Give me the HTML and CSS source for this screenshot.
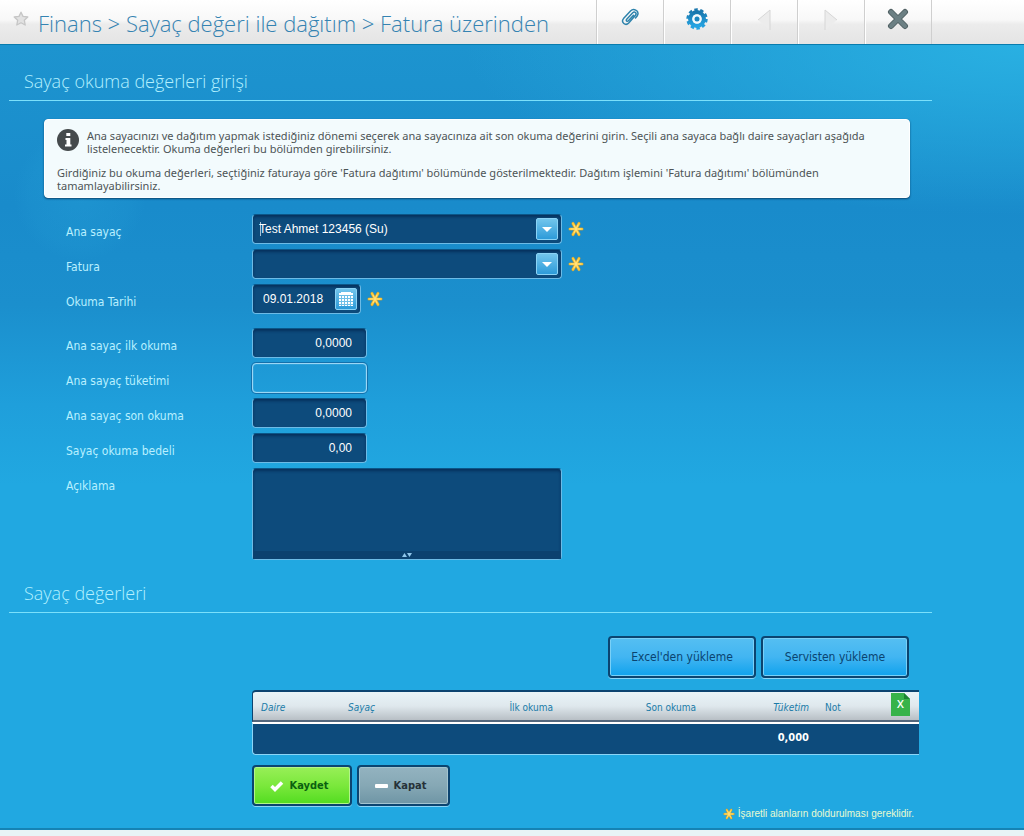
FILE: index.html
```html
<!DOCTYPE html>
<html lang="tr">
<head>
<meta charset="utf-8">
<title>Fatura üzerinden</title>
<link rel="stylesheet" href="styles.css">
</head>
<body>
<svg class="defs" aria-hidden="true">
  <symbol id="required" viewBox="0 0 16 16">
    <g fill="none" stroke-linecap="round">
      <path d="M2 8H14M5 2.500L11 13.500M11 2.500L5 13.500" stroke="#a99a55" stroke-width="3.200"/>
      <path d="M2 8H14M5 2.500L11 13.500M11 2.500L5 13.500" stroke="#ffc933" stroke-width="2.200"/>
      <path d="M3 8H13M6 4L10 12M10 4L6 12" stroke="#ffe48a" stroke-width="1"/>
    </g>
  </symbol>
</svg>
<header class="topbar">
  <div class="topbar-title">
    <button class="star" type="button" aria-label="Favorilere ekle">
      <svg width="16" height="16" viewBox="0 0 16 16"><path d="M8 1.200L10 5.400L14.800 6L11.300 9.200L12.200 14L8 11.700L3.800 14L4.700 9.200L1.200 6L6 5.400Z" fill="#e2e2e2" stroke="#c6c6c6" stroke-width="1.300" stroke-linejoin="round"/></svg>
    </button>
    <h1>Finans &gt; Sayaç değeri ile dağıtım &gt; Fatura üzerinden</h1>
  </div>
  <nav class="tools">
    <button type="button" aria-label="Ek dosya">
      <svg width="20" height="20" viewBox="0 0 20 20" fill="none" stroke="#2e83ac" stroke-width="1.500" stroke-linecap="round" stroke-linejoin="round"><path d="M13.500 7.200L8.400 12.700C7.100 14 5.500 12.500 6.700 11.200L12.500 5C14.700 2.800 17.300 5.300 15.300 7.500L8.700 15C5.500 18.300 0.600 14.400 3.500 10.600L10.500 3C13.500 0 19 2.500 17.800 6.500C17.500 8 16.500 9 15.500 10"/></svg>
    </button>
    <button type="button" aria-label="Ayarlar">
      <svg width="22" height="22" viewBox="0 0 22 22"><defs><linearGradient id="gear" x2="0" y2="1"><stop stop-color="#1a77ad"/><stop offset="1" stop-color="#25a4e3"/></linearGradient></defs><g fill="none" stroke="url(#gear)"><circle cx="11" cy="11" r="6.700" stroke-width="4.500"/><circle cx="11" cy="11" r="9.300" stroke-width="2.800" stroke-dasharray="3.400 2.443"/></g><circle cx="11" cy="11" r="4.800" fill="#f5fafc"/><circle cx="11" cy="11" r="2.500" fill="#1c86bf"/></svg>
    </button>
    <button type="button" aria-label="Önceki" disabled>
      <svg width="16" height="24" viewBox="0 0 16 24"><path d="M14 2V22L2 12Z" fill="#ececec"/><path d="M2 12L14 2V22" fill="none" stroke="#d6d6d6"/></svg>
    </button>
    <button type="button" aria-label="Sonraki" disabled>
      <svg width="16" height="24" viewBox="0 0 16 24"><path d="M2 2V22L14 12Z" fill="#ececec"/><path d="M2 22V2L14 12" fill="none" stroke="#d6d6d6"/></svg>
    </button>
    <button type="button" aria-label="Kapat">
      <svg width="22" height="22" viewBox="0 0 22 22" fill="none" stroke-linecap="round"><path d="M4 4L18 18M18 4L4 18" stroke="#526265" stroke-width="6"/><path d="M4 4L18 18M18 4L4 18" stroke="#6c8084" stroke-width="4"/></svg>
    </button>
  </nav>
</header>

<main class="page">
  <section>
    <h2>Sayaç okuma değerleri girişi</h2>
    <div class="info">
      <div class="info-lead">
        <svg width="22" height="22" viewBox="0 0 22 22"><circle cx="11" cy="11" r="11" fill="#454a4c"/><path d="M9.300 4h4v3h-4zM8.500 9h4.800v6.500h1.200v2H8v-2h1.500v-4.500h-1z" fill="#fff"/></svg>
        <p>Ana sayacınızı ve dağıtım yapmak istediğiniz dönemi seçerek ana sayacınıza ait son okuma değerini girin. Seçili ana sayaca bağlı daire sayaçları aşağıda listelenecektir. Okuma değerleri bu bölümden girebilirsiniz.</p>
      </div>
      <p>Girdiğiniz bu okuma değerleri, seçtiğiniz faturaya göre 'Fatura dağıtımı' bölümünde gösterilmektedir. Dağıtım işlemini 'Fatura dağıtımı' bölümünden tamamlayabilirsiniz.</p>
    </div>

    <form class="form">
      <div class="row">
        <label for="meter">Ana sayaç</label>
        <div class="combo">
          <select id="meter" class="field active"><option>Test Ahmet 123456 (Su)</option></select>
          <span class="chip arrow"></span>
        </div>
        <svg class="required" aria-label="Zorunlu"><use href="#required"/></svg>
      </div>
      <div class="row">
        <label for="invoice">Fatura</label>
        <div class="combo">
          <select id="invoice" class="field"><option></option></select>
          <span class="chip arrow"></span>
        </div>
        <svg class="required" aria-label="Zorunlu"><use href="#required"/></svg>
      </div>
      <div class="row">
        <label for="date">Okuma Tarihi</label>
        <div class="combo date">
          <input id="date" class="field" type="text" value="09.01.2018">
          <button class="chip" type="button" aria-label="Takvim">
            <svg width="14" height="14" viewBox="0 0 14 14"><path d="M2 0h10v1h2v13H0V1h2z" fill="#fff"/><path d="M0 3.500H14M0 6.500H14M0 9.500H14M0 12.500H14M2.500 3V14M5.500 3V14M8.500 3V14M11.500 3V14" stroke="#6fc0e8" stroke-width="1"/></svg>
          </button>
        </div>
        <svg class="required" aria-label="Zorunlu"><use href="#required"/></svg>
      </div>
      <div class="row spaced">
        <label for="first">Ana sayaç ilk okuma</label>
        <input id="first" class="field number" type="text" value="0,0000">
      </div>
      <div class="row">
        <label for="usage">Ana sayaç tüketimi</label>
        <input id="usage" class="field number readonly" type="text" readonly>
      </div>
      <div class="row">
        <label for="last">Ana sayaç son okuma</label>
        <input id="last" class="field number" type="text" value="0,0000">
      </div>
      <div class="row">
        <label for="fee">Sayaç okuma bedeli</label>
        <input id="fee" class="field number" type="text" value="0,00">
      </div>
      <div class="row top">
        <label for="note">Açıklama</label>
        <div class="combo">
          <textarea id="note" class="field"></textarea>
          <span class="grip"><svg width="10" height="4" viewBox="0 0 10 4"><path d="M0 4L2.500 0L5 4ZM5 0H10L7.500 4Z" fill="#8fc6ea"/></svg></span>
        </div>
      </div>
    </form>
  </section>

  <section>
    <h2>Sayaç değerleri</h2>
    <div class="loaders">
      <button class="btn blue" type="button">Excel'den yükleme</button>
      <button class="btn blue" type="button">Servisten yükleme</button>
    </div>
    <div class="results">
      <table>
        <colgroup><col class="c-flat"><col class="c-meter"><col class="c-first"><col class="c-last"><col class="c-usage"><col class="c-note"><col></colgroup>
        <thead>
          <tr>
            <th><em>Daire</em></th><th><em>Sayaç</em></th><th class="num">İlk okuma</th><th class="num">Son okuma</th><th class="num"><em>Tüketim</em></th><th>Not</th>
            <th><button class="export" type="button" aria-label="Excel'e aktar"><svg width="19" height="23" viewBox="0 0 19 23"><path d="M0 0H13L19 6V23H0Z" fill="#37b34a"/><path d="M13 0L19 6H13Z" fill="#1c8434"/></svg><span>X</span></button></th>
          </tr>
        </thead>
        <tbody>
          <tr><td></td><td></td><td></td><td></td><td class="num">0,000</td><td></td><td></td></tr>
        </tbody>
      </table>
    </div>
    <div class="actions">
      <button class="btn green" type="button"><svg width="14" height="12" viewBox="0 0 14 12"><path d="M1.500 6L5 9.500L12 2.500" fill="none" stroke="#fff" stroke-width="3.500"/></svg>Kaydet</button>
      <button class="btn gray" type="button"><svg width="13" height="12" viewBox="0 0 13 12"><rect y="4" width="13" height="4" rx="1" fill="#fff"/></svg>Kapat</button>
    </div>
    <p class="legend"><svg width="12" height="12"><use href="#required"/></svg>İşaretli alanların doldurulması gereklidir.</p>
  </section>
</main>
</body>
</html>
```
FILE: styles.css
```css
* { box-sizing: border-box; }
body {
  margin: 0;
  min-height: 100vh;
  background: #e8f4f6;
  font-family: "DejaVu Sans Condensed", "Noto Sans", sans-serif;
  font-size: 12px;
}
p, h1, h2 { margin: 0; }
button { padding: 0; border: 0; background: none; font: inherit; cursor: pointer; }
svg { flex: none; display: block; }
.defs { position: absolute; width: 0; height: 0; }

.topbar {
  display: flex;
  height: 45px;
  padding-right: 92px;
  background: linear-gradient(#fff, #f8f8f8 45%, #ececec 55%, #e4e4e4);
  border-bottom: 1px solid #087cae;
}
.topbar-title { flex: 1; display: flex; align-items: flex-start; padding-left: 13px; }
.star { margin-top: 11px; }
h1 {
  margin-left: 9px;
  font: 300 22px/46px "Open Sans", sans-serif;
  color: #3583b2;
  white-space: nowrap;
}
.tools { display: flex; border-right: 1px solid #cfcfcf; }
.tools button {
  display: flex;
  justify-content: center;
  width: 67px;
  padding-top: 8px;
  border-left: 1px solid #cfcfcf;
  box-shadow: inset 1px 0 #fff;
}

.page {
  padding: 0 92px 6px 9px;
  border-bottom: 2px solid #1583b4;
  background:
    radial-gradient(circle at 80px 150px, #28a5da50 0, #28a5da22 50px, transparent 66px),
    radial-gradient(ellipse 560px 170px at 100% 0, #29b0e2, transparent),
    linear-gradient(#1d94cf 0, #198bcb 160px, #1b8fcd 260px, #1f9fdb 360px, #21a8e1 440px);
}
h2 {
  height: 56px;
  padding: 20px 15px 0;
  border-bottom: 1px solid #7be0fb;
  font: 300 18px/32px "Open Sans", sans-serif;
  color: #b3f0ff;
}
section + section h2 { height: 53px; padding-top: 17px; }
.info {
  margin: 18px 22px 16px 35px;
  padding: 9px 32px 5px 12px;
  border: 1px solid #fff;
  border-radius: 4px;
  background: #f3fbfd;
  box-shadow: 0 1px 2px #0b4770;
  font-family: "Noto Sans", sans-serif;
  font-size: 11px;
  line-height: 13px;
  color: #4d5456;
}
.info-lead { display: flex; gap: 8px; margin-bottom: 11px; }

.form { display: flex; flex-direction: column; gap: 5px; padding-left: 57px; }
.row { display: flex; align-items: center; }
.row label { flex: none; width: 186px; padding-top: 5px; line-height: 16px; color: #b9f0ff; }
.row.spaced { margin-top: 9px; }
.row.top { align-items: flex-start; }
.row.top label { padding-top: 10px; }
.field {
  display: block;
  width: 100%;
  height: 30px;
  padding: 0 8px 0 6px;
  border: 1px solid #6dbbe6;
  border-top-color: #0b5688;
  border-radius: 4px;
  outline: 0;
  appearance: none;
  background: #0d4b7c;
  box-shadow: inset 0 2px 3px #06305c;
  font: 12px "Liberation Sans", sans-serif;
  color: #fff;
}
.active { background: linear-gradient(#a9c4d8, #a9c4d8) 7px center / 1px 14px no-repeat #0d4b7c; }
.number { width: 115px; padding-right: 14px; text-align: right; }
.readonly {
  background: transparent;
  border-color: #9bd7f5;
  box-shadow: 0 0 0 1px #1470ab, inset 0 0 1px #cfeeff;
}
.combo { position: relative; width: 310px; }
.date { width: 109px; }
.date .field { padding-left: 10px; }
textarea.field { height: 92px; resize: none; }
.chip {
  position: absolute;
  top: 4px;
  right: 4px;
  display: flex;
  align-items: center;
  justify-content: center;
  width: 22px;
  height: 22px;
  border: 1px solid #8bd3f5;
  border-radius: 2px;
  background: linear-gradient(#72c5ec, #2d9bd9);
}
.arrow { pointer-events: none; }
.arrow::after { content: ""; border: 5px solid transparent; border-top-color: #fff; border-bottom: 0; }
.required { width: 16px; height: 16px; margin-left: 6px; }
.grip {
  position: absolute;
  right: 1px;
  bottom: 1px;
  left: 1px;
  display: flex;
  justify-content: center;
  padding: 2px;
  background: #0b416f;
}

.loaders { display: flex; justify-content: flex-end; gap: 5px; margin: 23px 23px 12px; }
.btn {
  display: flex;
  align-items: center;
  justify-content: center;
  height: 42px;
  border: 2px solid #0b4470;
  border-radius: 4px;
}
.blue {
  width: 148px;
  background: linear-gradient(#55bff2, #42b5f2 50%, #0fa2ed);
  box-shadow: inset 0 0 0 1px #79d0f7, 0 1px #8bd5f7;
  color: #0a4470;
}
.results { margin: 0 13px 0 243px; }
table { width: 100%; table-layout: fixed; border-collapse: separate; border-spacing: 0; }
th {
  height: 32px;
  padding: 3px 8px 0;
  border-top: 2px solid #0b4470;
  border-bottom: 2px solid #53677d;
  background: linear-gradient(#e8f4f8, #dfe8ed 50%, #b8bfc5);
  font-size: 10px;
  font-weight: normal;
  text-align: left;
  color: #1a7ba8;
}
th:first-child { border-left: 1px solid #0b4470; border-top-left-radius: 4px; }
td {
  height: 33px;
  padding: 0 8px 3px;
  border-top: 2px solid #fff;
  border-bottom: 1px solid #8bd5f7;
  background: #0d4b7c;
  font-size: 11px;
  font-weight: bold;
  color: #fff;
}
td:first-child { border-left: 1px solid #8bd5f7; border-bottom-left-radius: 4px; }
.num { text-align: right; }
.c-flat { width: 88px; }
.c-meter { width: 110px; }
.c-first { width: 111px; }
.c-last { width: 143px; }
.c-usage { width: 113px; }
.c-note { width: 60px; }
th:last-child { padding: 0 9px 4px 0; }
.export { position: relative; display: block; margin-left: auto; }
.export span {
  position: absolute;
  inset: 0;
  font: 600 11px/22px "Open Sans", sans-serif;
  color: #fff;
}
.actions { display: flex; gap: 5px; margin: 10px 0 0 243px; }
.actions .btn { gap: 6px; height: 41px; padding-right: 6px; font-size: 11px; font-weight: bold; }
.green {
  width: 100px;
  background: linear-gradient(#98ef58, #7be83c 50%, #52dc20);
  box-shadow: inset 0 0 0 1px #b3f58a, 0 1px #8bd5f7;
  color: #0b6010;
}
.gray {
  width: 93px;
  background: linear-gradient(#93b3c0, #86a8b5 50%, #6e95a5);
  box-shadow: inset 0 0 0 1px #a3c4d0, 0 1px #8bd5f7;
  color: #263238;
}
.legend {
  display: flex;
  align-items: center;
  justify-content: flex-end;
  gap: 3px;
  margin-right: 18px;
  font: 10px/16px "Liberation Sans", sans-serif;
  color: #e9fbd0;
}
```
